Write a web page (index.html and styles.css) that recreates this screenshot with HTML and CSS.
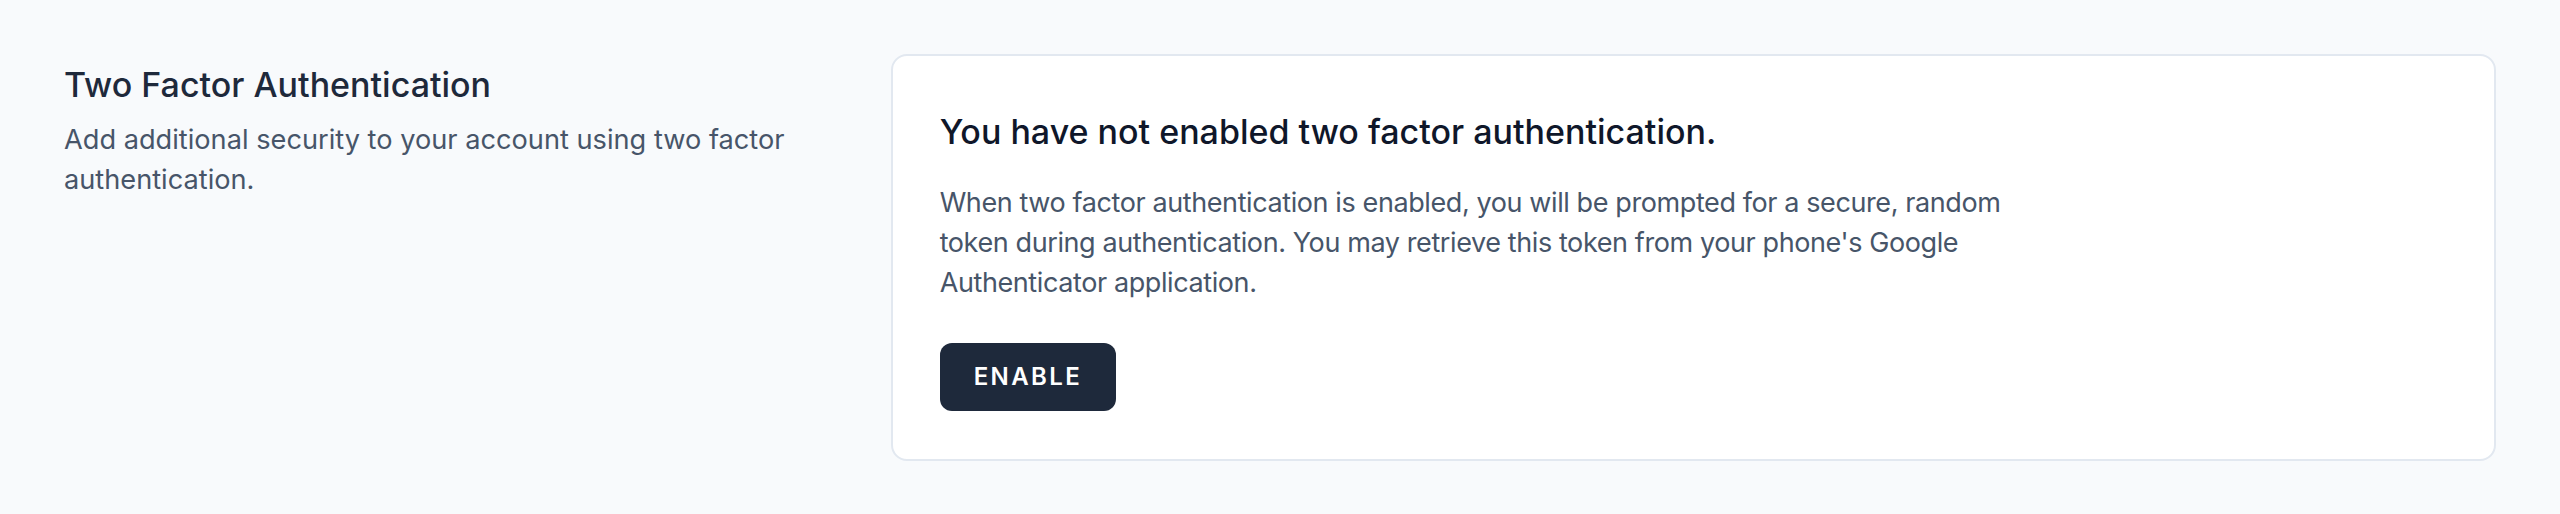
FILE: index.html
```html
<!DOCTYPE html>
<html lang="en">
<head>
    <meta charset="UTF-8">
    <meta name="viewport" content="width=device-width, initial-scale=1.0">
    <title>Two Factor Authentication</title>
    <link rel="stylesheet" href="styles.css">
</head>
<body>
    <div class="section">
        <div class="section-title">
            <h3>Two Factor Authentication</h3>
            <p>Add additional security to your account using two factor authentication.</p>
        </div>
        <div class="card">
            <h3>You have not enabled two factor authentication.</h3>
            <p>When two factor authentication is enabled, you will be prompted for a secure, random token during authentication. You may retrieve this token from your phone's Google Authenticator application.</p>
            <div class="actions">
                <button type="button">Enable</button>
            </div>
        </div>
    </div>
</body>
</html>
```

FILE: styles.css
```css
body { font-family: Inter, "Noto Sans", sans-serif; background: #f8fafc; margin: 0; padding: 54px 64px; }
.section { display: grid; grid-template-columns: repeat(3, 1fr); gap: 48px; }
.section-title { padding-top: 4px; }
.section-title h3 { margin: 0; font-size: 34px; line-height: 54px; font-weight: 500; color: #1e293b; }
.section-title p { margin: 8px 0 0; font-size: 27.2px; line-height: 40px; color: #475569; }
.card { grid-column: span 2; background: white; border: 2px solid #e2e8f0; border-radius: 16px; padding: 48px 47px 48px; }
.card h3 { margin: 0; font-size: 34px; line-height: 56px; font-weight: 500; color: #0f172a; }
.card p { margin: 23px 0 0; max-width: 1120px; font-size: 27px; letter-spacing: -0.4px; line-height: 40px; color: #475569; }
.actions { margin-top: 40px; }
button { font-family: inherit; background: #1e293b; color: white; border: 2px solid transparent; border-radius: 12px; padding: 16px 32px; font-size: 24px; line-height: 32px; font-weight: 600; letter-spacing: 0.1em; text-transform: uppercase; cursor: pointer; }
```
